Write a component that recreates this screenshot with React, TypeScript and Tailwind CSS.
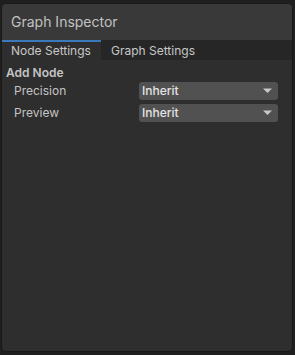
import React from "react";

function Dropdown() {
  return (
    <div className="flex h-[18px] w-[139px] items-center justify-between rounded-[3px] bg-[#515151] pl-[3px] pr-[6px]">
      <span className="text-[12px] font-medium leading-none text-[#e4e4e4]">Inherit</span>
      <svg width="9" height="6" viewBox="0 0 9 6">
        <polygon points="0,0.5 9,0.5 4.5,5" fill="#c8c8c8" />
      </svg>
    </div>
  );
}

export default function App() {
  return (
    <div
      className="h-[355px] w-[295px] bg-[#1f1f1f] pl-[1px] pr-[2px] pt-[3px] pb-[3px]"
      style={{ fontFamily: "Inter, 'Noto Sans', sans-serif" }}
    >
      <div className="flex h-full flex-col overflow-hidden rounded-[5px] border border-[#191919] bg-[#2e2e2e]">
        <div className="flex h-[36px] items-center bg-[#393939] pl-[9px]">
          <span className="text-[14px] leading-none text-[#c2c2c2]">Graph Inspector</span>
        </div>
        <div className="flex h-[20px] bg-[#262626]">
          <div className="flex w-[99px] items-center border-t-2 border-[#3a79bb] bg-[#2e2e2e] pl-[9px]">
            <span className="text-[12px] leading-none text-[#c8c8c8]">Node Settings</span>
          </div>
          <div className="flex items-center pl-[10px] pt-[2px]">
            <span className="text-[12px] leading-none text-[#c8c8c8]">Graph Settings</span>
          </div>
        </div>
        <div className="flex flex-col pl-[4px] pt-[7px]">
          <span className="text-[12px] font-semibold leading-none text-[#c4c4c4]">Add Node</span>
          <div className="mt-[3px] flex flex-col gap-[4px]">
            <div className="flex items-center">
              <span className="w-[133px] pl-[8px] text-[12px] leading-none text-[#c4c4c4]">Precision</span>
              <Dropdown />
            </div>
            <div className="flex items-center">
              <span className="w-[133px] pl-[8px] text-[12px] leading-none text-[#c4c4c4]">Preview</span>
              <Dropdown />
            </div>
          </div>
        </div>
      </div>
    </div>
  );
}
